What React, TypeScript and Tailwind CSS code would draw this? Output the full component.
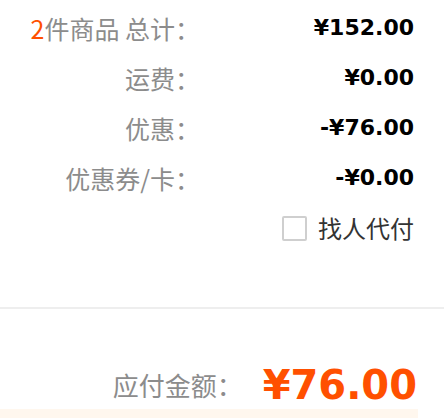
const ROWS = [
  { label: "运费：", value: "¥0.00" },
  { label: "优惠：", value: "-¥76.00" },
  { label: "优惠券/卡：", value: "-¥0.00" },
];

const cjk = "font-['Noto_Sans_CJK_SC',sans-serif]";
const num = "font-['DejaVu_Sans',sans-serif] font-bold";

function Row({ label, value }: { label: React.ReactNode; value: string }) {
  return (
    <div className="flex h-[50px] items-center">
      <div className={`w-[200px] shrink-0 text-right text-[25px] leading-none text-[#8c8c8c] ${cjk}`}>{label}</div>
      <div className={`flex-1 pr-[30px] text-right text-[22px] leading-none text-black ${num}`}>{value}</div>
    </div>
  );
}

export default function App() {
  return (
    <div className="h-[418px] w-[444px] overflow-hidden bg-white">
      <div className="pt-[3px]">
        <Row
          label={
            <>
              <span className="text-[#ff5000]">2</span>件商品 总计：
            </>
          }
          value="¥152.00"
        />
        {ROWS.map((r) => (
          <Row key={r.label} label={r.label} value={r.value} />
        ))}
        <div className="flex h-[50px] items-center justify-end pr-[30px]">
          <span className="mr-[11px] h-[25px] w-[25px] rounded-[2px] border-2 border-[#cfcfcf] bg-white" />
          <span className={`text-[24px] leading-none text-[#333] ${cjk}`}>找人代付</span>
        </div>
      </div>

      <div className="mt-[54px] h-[2px] bg-[#eeeeee]" />

      <div className="mt-[52px] flex h-[48px] items-center justify-end pr-[27px]">
        <span className={`text-[26px] leading-none text-[#8c8c8c] ${cjk}`}>应付金额：</span>
        <span className={`ml-[20px] text-[40px] leading-none text-[#ff5000] ${num}`}>¥76.00</span>
      </div>

      <div className="h-[9px] w-[418px] bg-[#fff7ee]" />
    </div>
  );
}
